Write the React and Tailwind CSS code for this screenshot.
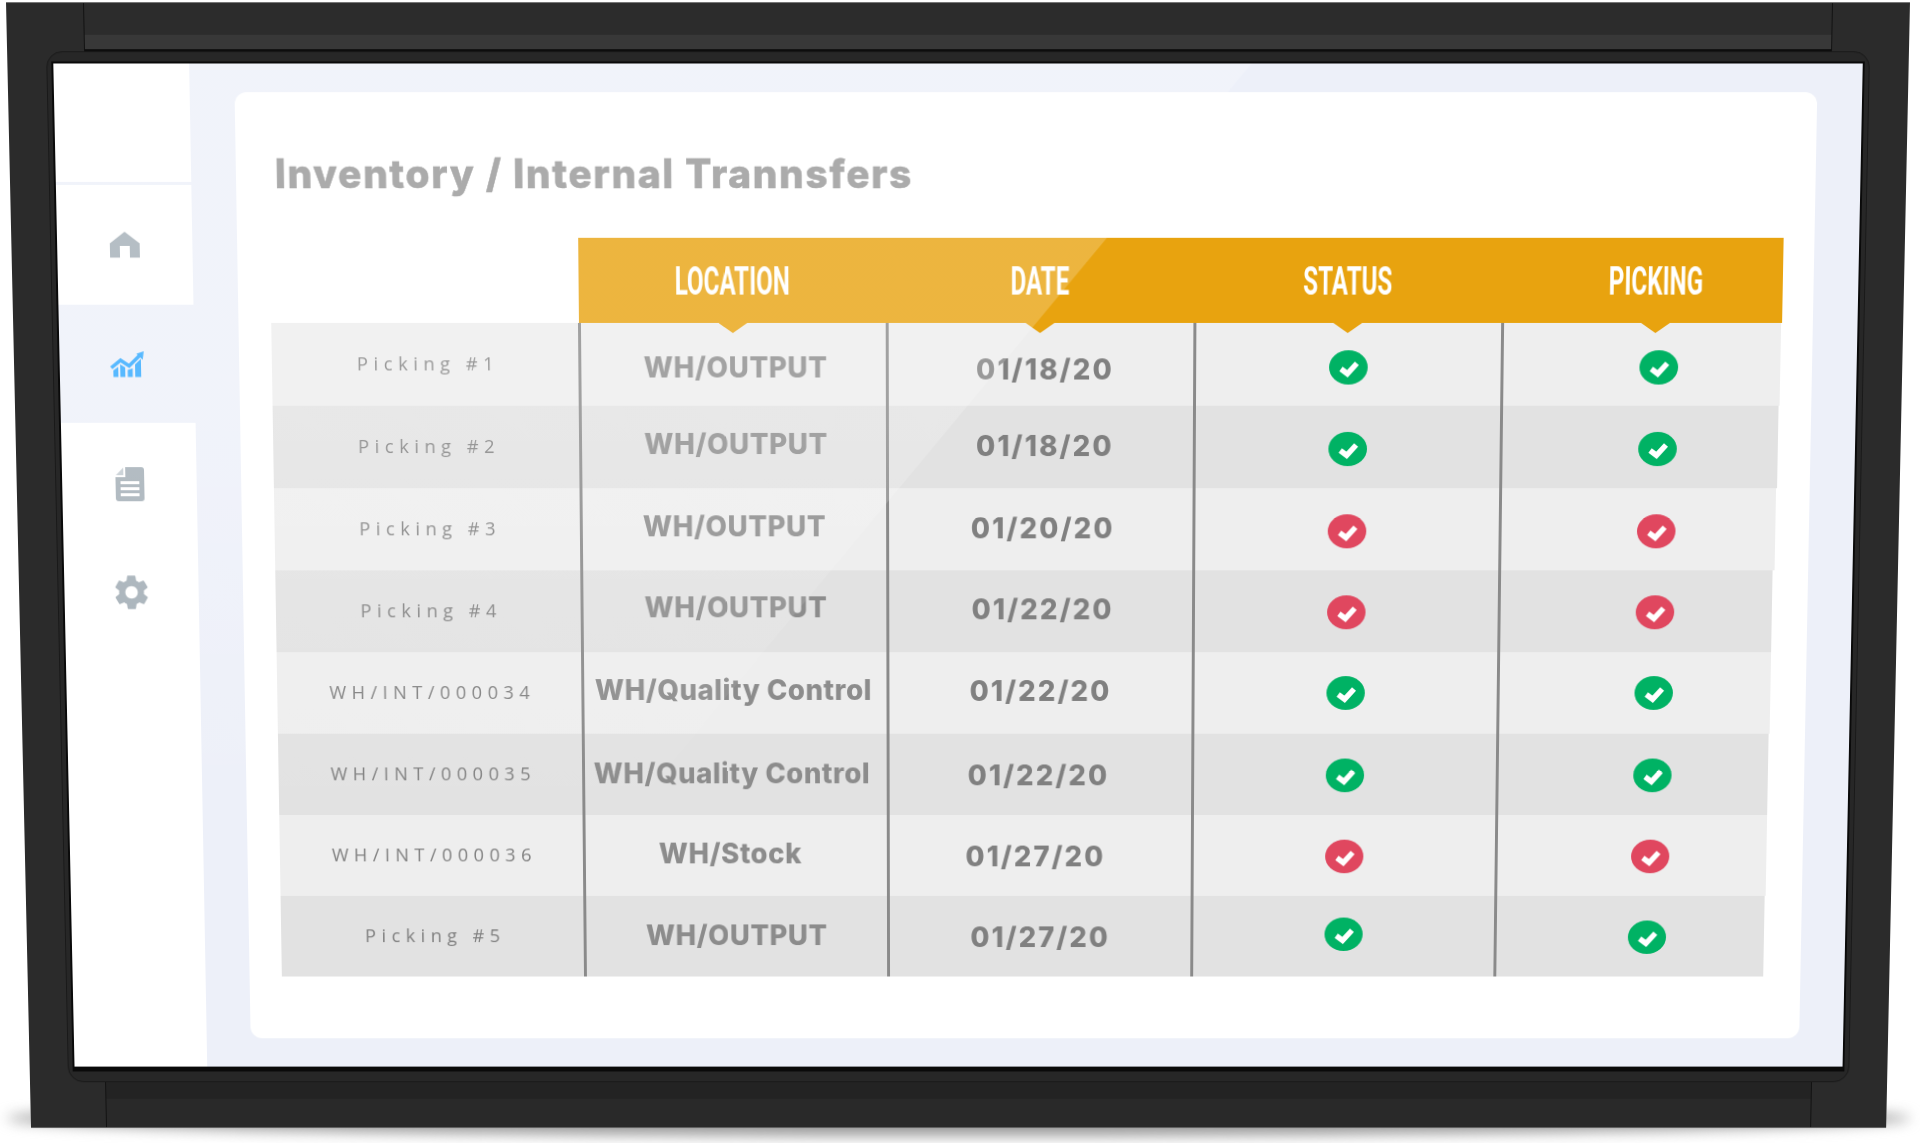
import React from 'react';
import { MdSettings } from 'react-icons/md';

// locShift / dateShift / dotShift: the mock-up's text isn't centred the same in every row.
// The rows also end a little short of each other on the right, hence rowWidth.
const ROWS = [
  { name: 'Picking #1', location: 'WH/OUTPUT', date: '01/18/20', status: true, picking: true, rowWidth: 'w-[1521px]', locShift: 'translate-x-[3px] translate-y-[3px]', dateShift: 'translate-x-[4px] translate-y-[5px]', dotShift: 'translate-y-[3px]', pickShift: 'translate-y-[3px]' },
  { name: 'Picking #2', location: 'WH/OUTPUT', date: '01/18/20', status: true, picking: true, rowWidth: 'w-[1520px]', locShift: 'translate-x-[3px] -translate-y-[3px]', dateShift: 'translate-x-[4px] -translate-y-[1px]', dotShift: 'translate-y-[2px]', pickShift: 'translate-y-[2px]' },
  { name: 'Picking #3', location: 'WH/OUTPUT', date: '01/20/20', status: false, picking: false, rowWidth: 'w-[1519px]', locShift: 'translate-x-[1px] -translate-y-[3px]', dateShift: 'translate-x-[2px] -translate-y-[1px]', dotShift: 'translate-y-[2px]', pickShift: 'translate-y-[2px]' },
  { name: 'Picking #4', location: 'WH/OUTPUT', date: '01/22/20', status: false, picking: false, rowWidth: 'w-[1517px]', locShift: 'translate-x-[2px] -translate-y-[4px]', dateShift: 'translate-x-[2px] -translate-y-[2px]', dotShift: 'translate-y-[1px]', pickShift: 'translate-y-[1px]' },
  { name: 'WH/INT/000034', location: 'WH/Quality Control', date: '01/22/20', status: true, picking: true, rowWidth: 'w-[1517px]', locShift: '-translate-x-[1px] -translate-y-[3px]', dateShift: '-translate-y-[2px]', dotShift: '', pickShift: '' },
  { name: 'WH/INT/000035', location: 'WH/Quality Control', date: '01/22/20', status: true, picking: true, rowWidth: 'w-[1516px]', locShift: '-translate-x-[3px] -translate-y-[1px]', dateShift: '-translate-x-[2px] translate-y-[1px]', dotShift: 'translate-y-[1px]', pickShift: 'translate-y-[1px]' },
  { name: 'WH/INT/000036', location: 'WH/Stock', date: '01/27/20', status: false, picking: false, rowWidth: 'w-[1516px]', locShift: '-translate-x-[5px] -translate-y-[2px]', dateShift: '-translate-x-[5px] translate-y-[1px]', dotShift: 'translate-y-[1px]', pickShift: '-translate-x-[1px] translate-y-[1px]' },
  { name: 'Picking #5', location: 'WH/OUTPUT', date: '01/27/20', status: true, picking: true, rowWidth: 'w-[1515px]', locShift: 'translate-x-[1px] -translate-y-[1px]', dateShift: 'translate-y-[1px]', dotShift: '-translate-y-[2px]', pickShift: '-translate-x-[3px] translate-y-[1px]' },
];

const HEADERS = ['LOCATION', 'DATE', 'STATUS', 'PICKING'];

// Maps the flat monitor (w x h) on to the quad seen in the picture
function quadToMatrix(w, h, [[x0, y0], [x1, y1], [x2, y2], [x3, y3]]) {
  const dx1 = x1 - x2;
  const dx2 = x3 - x2;
  const dy1 = y1 - y2;
  const dy2 = y3 - y2;
  const sx = x0 - x1 + x2 - x3;
  const sy = y0 - y1 + y2 - y3;
  const den = dx1 * dy2 - dx2 * dy1;
  const g = (sx * dy2 - dx2 * sy) / den;
  const k = (dx1 * sy - sx * dy1) / den;
  const a = x1 - x0 + g * x1;
  const b = x3 - x0 + k * x3;
  const d = y1 - y0 + g * y1;
  const e = y3 - y0 + k * y3;
  return `matrix3d(${a / w},${d / w},0,${g / w},${b / h},${e / h},0,${k / h},0,0,1,0,${x0},${y0},0,1)`;
}

const HomeIcon = () => (
  <svg viewBox="0 0 30 26" className="w-[30px] h-[26px]" fill="#a3aeb6">
    <path d="M15 0L30 11.5V25.5H20V14H10V25.5H0V11.5Z" />
  </svg>
);

const ChartIcon = () => (
  <svg viewBox="0 0 34 26" className="w-[34px] h-[26px]" fill="#2ea8ff">
    <path d="M34 0L32.8 8.5L26.5 2.5Z" />
    <path d="M1 16.5L10.5 9L19 14.5L30 4" fill="none" stroke="#2ea8ff" strokeWidth="3.5" />
    <path d="M3 19L8 15.5V25.5H3ZM10 13L15 16V25.5H10ZM17.5 18.5L22.5 17V25.5H17.5ZM25 13L31 7.5V25.5H25Z" />
  </svg>
);

const DocIcon = () => (
  <svg viewBox="0 0 29 34" className="w-[29px] h-[34px]" fill="#a3aeb6">
    <path d="M10 0H26Q29 0 29 3V31Q29 34 26 34H3Q0 34 0 31V10H10Z" />
    <path d="M8 0.5V8H0.5Z" fill="#c3cbd1" />
    <path d="M5 14H24V17H5ZM5 20H24V23H5ZM5 26H24V29H5Z" fill="#fff" />
  </svg>
);

const StatusDot = ({ ok, className }) => (
  <svg viewBox="0 0 39 34" className={`w-[39px] h-[34px] ${className}`}>
    <ellipse cx="19.5" cy="17" rx="19.5" ry="17" fill={ok ? '#00b264' : '#e0475f'} />
    <path d="M12 18.5L18.5 23.3L28 13" fill="none" stroke="#fff" strokeWidth="5.5" />
  </svg>
);

const Sidebar = () => (
  <div className="w-[136px] shrink-0 bg-white flex flex-col">
    <div className="h-[119px] border-b-[3px] border-[#edf0f9]" />
    <div className="h-[118px] flex items-center justify-center">
      <HomeIcon />
    </div>
    <div className="h-[117px] bg-[#edf0f9] flex items-center justify-center">
      <ChartIcon />
    </div>
    <div className="h-[122px] flex items-center justify-center">
      <DocIcon />
    </div>
    <div className="h-[94px] flex items-center justify-center">
      <MdSettings className="w-[48px] h-[42px] text-[#a3aeb6]" />
    </div>
  </div>
);

const Table = () => (
  <div className="ml-[33px]">
    <div className="grid grid-cols-[309px_310px_310px_283px] ml-[310px] w-[1212px] h-[84px] bg-[#e8a30f]">
      {HEADERS.map((label, i) => (
        <div key={label} className={i === 3 ? 'pl-[27px]' : ''}>
          <div className="relative h-full flex items-center justify-center pt-[2px]">
            <span className="inline-block font-['Roboto'] font-bold text-[38px] leading-none text-white scale-x-[0.64]">
              {label}
            </span>
            <div className="absolute top-full left-1/2 w-[29px] h-[10px] -ml-[14px] bg-[#e8a30f] [clip-path:polygon(0_0,100%_0,50%_100%)]" />
          </div>
        </div>
      ))}
    </div>
    {ROWS.map((row, i) => (
      <div
        key={row.name + i}
        className={`grid grid-cols-[309px_310px_310px_310px_1fr] h-[82px] ${row.rowWidth} ${i % 2 === 0 ? 'bg-[#eeeeee]' : 'bg-[#e2e2e2]'}`}
      >
        <div className="flex items-center justify-center pl-[6px] pb-[2px] font-['Open_Sans'] text-[18.5px] tracking-[0.3em] text-[#808080] whitespace-nowrap">
          {row.name}
        </div>
        <div className="border-l-[3px] border-[#8a8a8a] flex items-center justify-center pr-[2px] font-['Inter'] font-extrabold text-[28px] tracking-[0.02em] text-[#8c8c8c] whitespace-nowrap">
          <span className={row.locShift}>{row.location}</span>
        </div>
        <div className="border-l-[3px] border-[#8a8a8a] flex items-center justify-center font-['Inter'] font-extrabold text-[28px] tracking-[0.075em] text-[#808080]">
          <span className={row.dateShift}>{row.date}</span>
        </div>
        <div className="border-l-[3px] border-[#8a8a8a] flex items-center justify-center">
          <StatusDot ok={row.status} className={row.dotShift} />
        </div>
        <div className="border-l-[3px] border-[#8a8a8a] flex items-center pl-[137px]">
          <StatusDot ok={row.picking} className={row.pickShift} />
        </div>
      </div>
    ))}
  </div>
);

export default function App() {
  const transform = quadToMatrix(1904, 1126, [[6, 2], [1910, 2], [1886, 1128], [31, 1128]]);

  return (
    <div className="relative w-[1920px] h-[1143px] overflow-hidden bg-white">
      <div className="absolute top-0 left-0 w-[1904px] h-[1126px] origin-top-left" style={{ transform }}>
        {/* floor shadow */}
        <div className="absolute -left-[25px] -right-[25px] -bottom-[8px] h-[36px] rounded-[50%] bg-[#9a9a9a] blur-[7px]" />

        <div className="relative h-full flex flex-col bg-[#2b2b2b] border-t border-[#777] border-b border-b-[#666]">
          {/* top strip */}
          <div className="h-[47px] shrink-0 mx-[77px] flex flex-col border-x border-[#111]">
            <div className="h-[31px] bg-[#2c2c2c]" />
            <div className="flex-1 bg-[#383838] border-b-2 border-[#0d0d0d]" />
          </div>

          {/* bezel + screen */}
          <div className="flex-1 min-h-0 mx-[39px] px-[6px] pt-[11px] pb-[15px] rounded-[16px] border border-[#191919] bg-[#272727]">
            <div className="relative h-full flex overflow-hidden bg-[#edf0f9] shadow-[0_0_0_2px_#0a0a0a,0_3px_0_2px_#0a0a0a]">
              <Sidebar />
              <main className="flex-1 min-w-0 pl-[45px] pr-[45px] pt-[28px] pb-[29px]">
                <div className="h-full rounded-[12px] bg-white pt-[58px]">
                  <h1 className="ml-[39px] h-[85px] font-['Inter'] font-extrabold text-[39px] leading-[44px] tracking-[0.043em] text-[#969696] [-webkit-text-stroke:0.5px_#969696] whitespace-nowrap">
                    Inventory / Internal Trannsfers
                  </h1>
                  <Table />
                </div>
              </main>
              {/* glass glare */}
              <div className="absolute inset-0 pointer-events-none bg-linear-to-b from-white/20 from-35% to-white/0 to-75% [clip-path:polygon(0_0,1200px_0,668px_630px,400px_950px,0_950px)]" />
            </div>
          </div>

          {/* bottom strip */}
          <div className="h-[46px] shrink-0 mx-[77px] flex flex-col border-x border-[#111]">
            <div className="h-[17px] bg-[#232323]" />
            <div className="flex-1 bg-[#292929]" />
          </div>
        </div>
      </div>
    </div>
  );
}
